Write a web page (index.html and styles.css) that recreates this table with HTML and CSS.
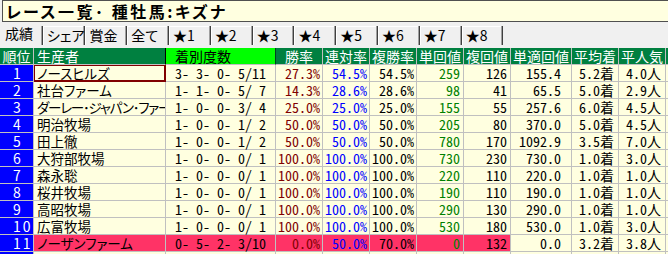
FILE: index.html
```html
<!DOCTYPE html>
<html lang="ja">
<head>
<meta charset="utf-8">
<title>レース一覧･ 種牡馬:キズナ</title>
<link rel="stylesheet" href="styles.css">
</head>
<body>
<div class="title">レース一覧･ 種牡馬:キズナ</div>
<div class="tabs">
  <div class="tab active">成績</div>
  <div class="tab">シェア</div>
  <div class="tab">賞金</div>
  <div class="tab">全て</div>
  <div class="tab">★1</div>
  <div class="tab">★2</div>
  <div class="tab">★3</div>
  <div class="tab">★4</div>
  <div class="tab">★5</div>
  <div class="tab">★6</div>
  <div class="tab">★7</div>
  <div class="tab">★8</div>
</div>
<div class="grid">
  <div class="row head">
    <div class="c h">順位</div>
    <div class="c h h-name">生産者</div>
    <div class="c h h-rec">着別度数</div>
    <div class="c h">勝率</div>
    <div class="c h">連対率</div>
    <div class="c h">複勝率</div>
    <div class="c h">単回値</div>
    <div class="c h">複回値</div>
    <div class="c h">単適回値</div>
    <div class="c h">平均着</div>
    <div class="c h">平人気</div>
    <div class="c h"></div>
  </div>
  <div class="row">
    <div class="c rank">1</div><div class="c name sel">ノースヒルズ</div><div class="c rec">3- 3- 0- 5/11</div>
    <div class="c num win">27.3%</div><div class="c num ren">54.5%</div><div class="c num fuku">54.5%</div>
    <div class="c num tan">259</div><div class="c num fk">126</div><div class="c num tt">155.4</div>
    <div class="c num avg">5.2着</div><div class="c num pop">4.0人</div><div class="c"></div>
  </div>
  <div class="row">
    <div class="c rank">2</div><div class="c name">社台ファーム</div><div class="c rec">1- 1- 0- 5/ 7</div>
    <div class="c num win">14.3%</div><div class="c num ren">28.6%</div><div class="c num fuku">28.6%</div>
    <div class="c num tan">98</div><div class="c num fk">41</div><div class="c num tt">65.5</div>
    <div class="c num avg">5.0着</div><div class="c num pop">2.9人</div><div class="c"></div>
  </div>
  <div class="row">
    <div class="c rank">3</div><div class="c name tight">ダーレー･ジャパン･ファーム</div><div class="c rec">1- 0- 0- 3/ 4</div>
    <div class="c num win">25.0%</div><div class="c num ren">25.0%</div><div class="c num fuku">25.0%</div>
    <div class="c num tan">155</div><div class="c num fk">55</div><div class="c num tt">257.6</div>
    <div class="c num avg">6.0着</div><div class="c num pop">4.5人</div><div class="c"></div>
  </div>
  <div class="row">
    <div class="c rank">4</div><div class="c name">明治牧場</div><div class="c rec">1- 0- 0- 1/ 2</div>
    <div class="c num win">50.0%</div><div class="c num ren">50.0%</div><div class="c num fuku">50.0%</div>
    <div class="c num tan">205</div><div class="c num fk">80</div><div class="c num tt">370.0</div>
    <div class="c num avg">5.0着</div><div class="c num pop">4.5人</div><div class="c"></div>
  </div>
  <div class="row">
    <div class="c rank">5</div><div class="c name">田上徹</div><div class="c rec">1- 0- 0- 1/ 2</div>
    <div class="c num win">50.0%</div><div class="c num ren">50.0%</div><div class="c num fuku">50.0%</div>
    <div class="c num tan">780</div><div class="c num fk">170</div><div class="c num tt">1092.9</div>
    <div class="c num avg">3.5着</div><div class="c num pop">7.0人</div><div class="c"></div>
  </div>
  <div class="row">
    <div class="c rank">6</div><div class="c name">大狩部牧場</div><div class="c rec">1- 0- 0- 0/ 1</div>
    <div class="c num win">100.0%</div><div class="c num ren">100.0%</div><div class="c num fuku">100.0%</div>
    <div class="c num tan">730</div><div class="c num fk">230</div><div class="c num tt">730.0</div>
    <div class="c num avg">1.0着</div><div class="c num pop">3.0人</div><div class="c"></div>
  </div>
  <div class="row">
    <div class="c rank">7</div><div class="c name">森永聡</div><div class="c rec">1- 0- 0- 0/ 1</div>
    <div class="c num win">100.0%</div><div class="c num ren">100.0%</div><div class="c num fuku">100.0%</div>
    <div class="c num tan">220</div><div class="c num fk">110</div><div class="c num tt">220.0</div>
    <div class="c num avg">1.0着</div><div class="c num pop">1.0人</div><div class="c"></div>
  </div>
  <div class="row">
    <div class="c rank">8</div><div class="c name">桜井牧場</div><div class="c rec">1- 0- 0- 0/ 1</div>
    <div class="c num win">100.0%</div><div class="c num ren">100.0%</div><div class="c num fuku">100.0%</div>
    <div class="c num tan">190</div><div class="c num fk">110</div><div class="c num tt">190.0</div>
    <div class="c num avg">1.0着</div><div class="c num pop">1.0人</div><div class="c"></div>
  </div>
  <div class="row">
    <div class="c rank">9</div><div class="c name">高昭牧場</div><div class="c rec">1- 0- 0- 0/ 1</div>
    <div class="c num win">100.0%</div><div class="c num ren">100.0%</div><div class="c num fuku">100.0%</div>
    <div class="c num tan">290</div><div class="c num fk">130</div><div class="c num tt">290.0</div>
    <div class="c num avg">1.0着</div><div class="c num pop">1.0人</div><div class="c"></div>
  </div>
  <div class="row">
    <div class="c rank">10</div><div class="c name">広富牧場</div><div class="c rec">1- 0- 0- 0/ 1</div>
    <div class="c num win">100.0%</div><div class="c num ren">100.0%</div><div class="c num fuku">100.0%</div>
    <div class="c num tan">530</div><div class="c num fk">180</div><div class="c num tt">530.0</div>
    <div class="c num avg">1.0着</div><div class="c num pop">3.0人</div><div class="c"></div>
  </div>
  <div class="row hl">
    <div class="c rank">11</div><div class="c name">ノーザンファーム</div><div class="c rec">0- 5- 2- 3/10</div>
    <div class="c num win">0.0%</div><div class="c num ren">50.0%</div><div class="c num fuku">70.0%</div>
    <div class="c num tan">0</div><div class="c num fk">132</div><div class="c num tt">0.0</div>
    <div class="c num avg">3.2着</div><div class="c num pop">3.8人</div><div class="c"></div>
  </div>
  <div class="row">
    <div class="c rank"></div><div class="c name"></div><div class="c rec"></div>
    <div class="c"></div><div class="c"></div><div class="c"></div><div class="c"></div><div class="c"></div>
    <div class="c"></div><div class="c"></div><div class="c"></div><div class="c"></div>
  </div>
</div>
</body>
</html>
```
FILE: styles.css
```css
html, body {
  margin: 0;
  padding: 0;
  overflow: hidden;
}
body {
  width: 668px;
  height: 254px;
  background: #f0f0f0;
  color: #000;
  font-family: "Noto Sans CJK JP", "Noto Sans", sans-serif;
  font-size: 14px;
  font-feature-settings: "palt" 1;
}

.title {
  margin: 0 0 0 2px;
  height: 19px;
  padding: 1px 0 0 3px;
  border: 1px solid #505050;
  border-right: none;
  background: #ffffe0;
  font-weight: bold;
  font-size: 16px;
  letter-spacing: 2.5px;
  line-height: 19px;
  white-space: nowrap;
}

.tabs {
  display: flex;
  height: 26px;
  padding-top: 4px;
  box-sizing: border-box;
}
.tab {
  flex: 0 0 41.8px;
  box-sizing: border-box;
  height: 19px;
  padding: 2px 0 0 4px;
  line-height: 15px;
  border-right: 1px solid #404040;
  box-shadow: inset -1px 0 #a0a0a0, inset 1px 1px #ffffff;
  white-space: nowrap;
}
.tab.active {
  flex-basis: 43px;
  padding: 0 0 0 5px;
  box-shadow: inset -1px 0 #a0a0a0;
}

.grid {
  display: flex;
  flex-direction: column;
}
.row {
  display: grid;
  grid-template-columns: 34px 132px 110px 47px 47px 47px 47px 47px 61px 47px 47px 47px;
  height: 17px;
}
.c {
  box-sizing: border-box;
  height: 17px;
  border-right: 1px solid #c0c0c0;
  border-bottom: 1px solid #c0c0c0;
  background: #ffffe0;
  line-height: 16px;
  white-space: nowrap;
}

.h {
  background: #008040;
  color: #fff;
  text-align: center;
  font-size: 14px;
}
.h-name {
  text-align: left;
  padding-left: 3px;
  border-right-color: #000;
}
.h-rec {
  background: #00ff00;
  color: #000;
  text-align: left;
  padding-left: 9px;
  border-right-color: #004020;
}

.rank {
  background: #0000ff;
  color: #fff;
  padding-left: 13px;
  letter-spacing: 2px;
}
.name {
  padding-left: 3px;
  font-size: 13.5px;
  overflow: hidden;
}
.name.tight {
  letter-spacing: -1.2px;
}
.name.sel {
  border-right-color: #800000;
  border-bottom-color: #800000;
  box-shadow: inset 0 0 0 1px #800000;
}
.rec {
  text-align: center;
  font-feature-settings: "hwid" 1;
}
.num {
  text-align: right;
  padding-right: 2px;
  font-feature-settings: "hwid" 1;
}
.win { color: #800000; }
.ren { color: #0000ff; }
.tan { color: #008000; padding-right: 3px; }
.fk { padding-right: 3px; }
.tt { padding-right: 10px; }
.avg, .pop { padding-right: 4px; }

.hl .name, .hl .rec, .hl .win, .hl .ren, .hl .fuku, .hl .tan, .hl .fk {
  background: #ff3366;
}
```
